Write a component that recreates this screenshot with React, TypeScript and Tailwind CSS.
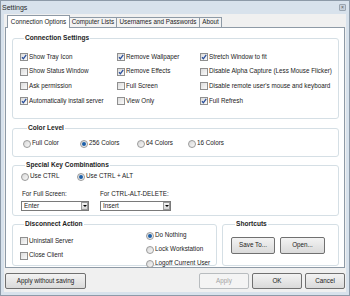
import React from 'react';

const Check = ({ on }: { on?: boolean }) => (
  <span className="relative w-[8px] h-[8px] shrink-0 border border-[#8f8f8f] bg-gradient-to-br from-[#dcdcdc] to-[#fbfbfb]">
    {on && (
      <svg viewBox="0 0 8 8" className="absolute -left-[1px] -top-[1px] w-[8px] h-[8px]">
        <path d="M2 4.2 L3.4 5.8 L6.2 1.8" fill="none" stroke="#2a4f9c" strokeWidth="1.3" />
      </svg>
    )}
  </span>
);

const Radio = ({ on }: { on?: boolean }) => (
  <span className="w-[8px] h-[8px] shrink-0 rounded-full border border-[#9a9a9a] bg-gradient-to-br from-[#d8d8d8] to-[#f8f8f8] flex items-center justify-center">
    {on && <span className="w-[4px] h-[4px] rounded-full bg-[#1c5fa8]" />}
  </span>
);

const CheckItem = ({ label, on }: { label: string; on?: boolean }) => (
  <div className="flex items-center gap-[1px] h-[14.7px] whitespace-nowrap">
    <Check on={on} />
    <span>{label}</span>
  </div>
);

const RadioItem = ({ label, on }: { label: string; on?: boolean }) => (
  <div className="flex items-center gap-[1px] h-[14px] whitespace-nowrap">
    <Radio on={on} />
    <span>{label}</span>
  </div>
);

const Group = ({ title, className, children }: { title: string; className?: string; children: React.ReactNode }) => (
  <fieldset className={`border border-[#d5dfe5] rounded-[3px] ${className ?? ''}`}>
    <legend className="ml-[4px] px-[1px] font-bold text-[6.6px] text-[#1e1e1e] whitespace-nowrap">{title}</legend>
    {children}
  </fieldset>
);

const Select = ({ value, className }: { value: string; className?: string }) => (
  <div className={`h-[10px] border border-[#7a7a7a] bg-white flex items-center justify-between ${className ?? ''}`}>
    <span className="pl-[2px]">{value}</span>
    <span className="w-[7px] h-[8px] border border-[#9a9a9a] bg-gradient-to-b from-[#f4f4f4] to-[#d6d6d6] flex items-center justify-center">
      <span className="w-0 h-0 border-l-[2px] border-r-[2px] border-t-[2px] border-l-transparent border-r-transparent border-t-black" />
    </span>
  </div>
);

const Button = ({ label, className, disabled }: { label: string; className?: string; disabled?: boolean }) => (
  <button
    className={`rounded-[2px] border flex items-center justify-center whitespace-nowrap ${
      disabled
        ? 'border-[#b8bcbf] bg-[#f4f4f4] text-[#a3a3a3]'
        : 'border-[#707070] bg-gradient-to-b from-[#f3f3f3] to-[#dadada] text-[#1a1a1a]'
    } ${className ?? ''}`}
  >
    {label}
  </button>
);

const tabs = [
  { label: 'Computer Lists', w: 'w-[47px]' },
  { label: 'Usernames and Passwords', w: 'w-[83px]' },
  { label: 'About', w: 'w-[22px]' },
];

export default function App() {
  return (
    <div className="w-[350px] h-[296px] bg-[#d8e2ec] border border-[#8d9aa8] flex flex-col font-['Liberation_Sans',Arial,sans-serif] text-[6.3px] text-[#222] leading-none">
      <div className="h-[13px] flex items-center justify-between pl-[1px] pr-[3px]">
        <span className="text-[7px] text-[#2b2b2b]">Settings</span>
        <span className="w-[7px] h-[7px] border border-[#9aa5b1] bg-[#c8d1da] rounded-[1px] flex items-center justify-center text-[5px] text-[#555]">×</span>
      </div>

      <div className="flex-1 mx-[3px] mb-[3px] bg-[#f0f0f0] flex flex-col px-[1px]">
        <div className="flex items-end h-[13px] pl-[2px]">
          <div className="h-[13px] bg-white border border-b-0 border-[#8e9aa6] flex items-center -mb-[1px] z-10 w-[63px] justify-center whitespace-nowrap">
            Connection Options
          </div>
          {tabs.map((t) => (
            <div
              key={t.label}
              className={`h-[10px] border border-b-0 border-l-0 border-[#8e9aa6] bg-[#f3f3f3] flex items-center justify-center whitespace-nowrap ${t.w}`}
            >
              {t.label}
            </div>
          ))}
        </div>

        <div className="h-[241px] bg-white border border-[#8e9aa6] pl-[6px] pr-[5px] pt-[7px] flex flex-col">
          <Group title="Connection Settings" className="h-[84px] pl-[7px] pt-[8px]">
            <div className="grid grid-cols-[97px_83px_1fr]">
              <CheckItem label="Show Tray Icon" on />
              <CheckItem label="Remove Wallpaper" on />
              <CheckItem label="Stretch Window to fit" on />
              <CheckItem label="Show Status Window" />
              <CheckItem label="Remove Effects" on />
              <CheckItem label="Disable Alpha Capture (Less Mouse Flicker)" />
              <CheckItem label="Ask permission" />
              <CheckItem label="Full Screen" />
              <CheckItem label="Disable remote user's mouse and keyboard" />
              <CheckItem label="Automatically install server" on />
              <CheckItem label="View Only" />
              <CheckItem label="Full Refresh" on />
            </div>
          </Group>

          <Group title="Color Level" className="mt-[6px] h-[32px] pl-[10px] pt-[5px]">
            <div className="grid grid-cols-[57px_57px_51px_1fr]">
              <RadioItem label="Full Color" />
              <RadioItem label="256 Colors" on />
              <RadioItem label="64 Colors" />
              <RadioItem label="16 Colors" />
            </div>
          </Group>

          <Group title="Special Key Combinations" className="mt-[5px] h-[54px] pl-[8px] pr-[2px] pt-[1px]">
            <div className="grid grid-cols-[56px_1fr]">
              <RadioItem label="Use CTRL" />
              <RadioItem label="Use CTRL + ALT" on />
            </div>
            <div className="grid grid-cols-[79px_72px] mt-[7px]">
              <div className="flex flex-col gap-[4px]">
                <span className="pl-[1px]">For Full Screen:</span>
                <Select value="Enter" className="w-[68px]" />
              </div>
              <div className="flex flex-col gap-[4px]">
                <span>For CTRL-ALT-DELETE:</span>
                <Select value="Insert" className="w-[71px]" />
              </div>
            </div>
          </Group>

          <div className="flex gap-[5px] mt-[5px]">
            <Group title="Disconnect Action" className="w-[205px] h-[45px] pl-[7px] pt-[1px]">
              <div className="flex">
                <div className="w-[126px] pt-[5px] flex flex-col">
                  <CheckItem label="Uninstall Server" />
                  <CheckItem label="Close Client" />
                </div>
                <div className="flex flex-col">
                  <RadioItem label="Do Nothing" on />
                  <RadioItem label="Lock Workstation" />
                  <RadioItem label="Logoff Current User" />
                </div>
              </div>
            </Group>
            <Group title="Shortcuts" className="flex-1 h-[45px] pl-[8px] pt-[9px]">
              <div className="flex gap-[5px]">
                <Button label="Save To..." className="w-[44px] h-[17px]" />
                <Button label="Open..." className="w-[45px] h-[17px]" />
              </div>
            </Group>
          </div>
        </div>

        <div className="flex items-center mt-[5px] h-[16px]">
          <Button label="Apply without saving" className="w-[81px] h-[16px]" />
          <div className="flex-1" />
          <Button label="Apply" className="w-[50px] h-[16px]" disabled />
          <Button label="OK" className="w-[50px] h-[16px] ml-[3px]" />
          <Button label="Cancel" className="w-[40px] h-[16px] ml-[3px]" />
        </div>
      </div>
    </div>
  );
}
